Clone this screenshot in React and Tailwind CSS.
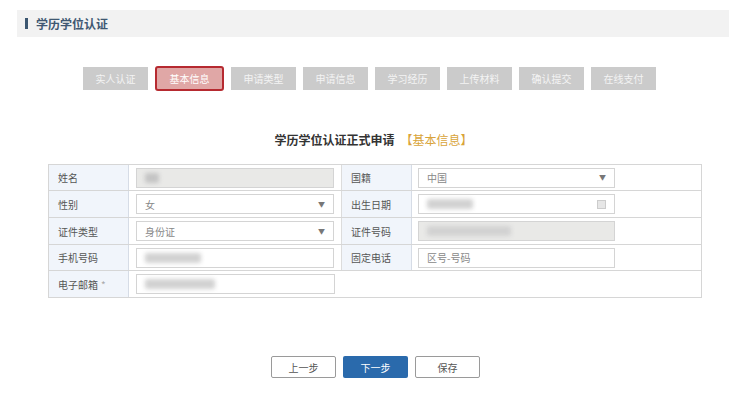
const steps = ["实人认证", "基本信息", "申请类型", "申请信息", "学习经历", "上传材料", "确认提交", "在线支付"];

function Blur({ w, dark }) {
  return (
    <div
      className={`h-[10px] rounded-[2px] blur-[2px] ${dark ? "bg-[#c4c4c4]" : "bg-[#d2d2d2]"}`}
      style={{ width: w }}
    />
  );
}

function Field({ gray, children, arrow, date }) {
  return (
    <div
      className={`flex h-[20px] w-full items-center border border-[#d4d4d4] px-[8px] text-[10px] text-[#888] ${
        gray ? "bg-[#e9e9e7]" : "bg-white"
      }`}
    >
      <div className="flex flex-1 items-center">{children}</div>
      {arrow && <span className="text-[7px] text-[#777]">▼</span>}
      {date && <span className="h-[9px] w-[9px] border border-[#ccc] bg-[#e6e6e6]" />}
    </div>
  );
}

function Label({ w, children }) {
  return (
    <div
      className="flex shrink-0 items-center border-r border-[#d6dce6] bg-[#f1f5fb] px-[9px] text-[10px] text-[#555]"
      style={{ width: w }}
    >
      {children}
    </div>
  );
}

function Cell({ children }) {
  return (
    <div className="flex w-[213px] shrink-0 items-center border-r border-[#dcdcdc] px-[7px]">
      {children}
    </div>
  );
}

function Right({ children }) {
  return <div className="flex flex-1 items-center pl-[6px] pr-[86px]">{children}</div>;
}

function Row({ h, children, last }) {
  return (
    <div className={`flex ${last ? "" : "border-b border-[#d6d6d6]"}`} style={{ height: h }}>
      {children}
    </div>
  );
}

export default function App() {
  return (
    <div
      className="h-[408px] w-[741px] bg-white pt-[10px]"
      style={{ fontFamily: '"Microsoft YaHei", "Noto Sans CJK SC", sans-serif' }}
    >
      {/* Header */}
      <div className="ml-[17px] flex h-[27px] w-[712px] items-center bg-[#f2f2f2] pl-[8px]">
        <span className="h-[11px] w-[3px] bg-[#3b5670]" />
        <span className="ml-[8px] text-[12px] font-bold text-[#3f5872]">学历学位认证</span>
      </div>

      {/* Steps */}
      <div className="mt-[29px] flex items-center justify-center gap-[7px] pr-[2px]">
        {steps.map((s, i) =>
          i === 1 ? (
            <div
              key={s}
              className="flex h-[25px] w-[69px] items-center justify-center rounded-[3px] border-2 border-[#b62a30] bg-[#e0a7a6] text-[10px] text-white"
            >
              {s}
            </div>
          ) : (
            <div
              key={s}
              className="flex h-[23px] w-[65px] items-center justify-center bg-[#cbcbcb] text-[10px] text-[#f4f4f4]"
            >
              {s}
            </div>
          )
        )}
      </div>

      {/* Title */}
      <div className="mt-[40px] flex justify-center pl-[6px] text-[12px] font-bold text-[#333]">
        学历学位认证正式申请
        <span className="ml-[6px] font-normal text-[#d9a43a]">【基本信息】</span>
      </div>

      {/* Table */}
      <div className="ml-[48px] mt-[15px] w-[654px] border border-[#d6d6d6]">
        <Row h={26}>
          <Label w={80}>姓名</Label>
          <Cell>
            <Field gray>
              <Blur w={14} dark />
            </Field>
          </Cell>
          <Label w={70}>国籍</Label>
          <Right>
            <Field arrow>中国</Field>
          </Right>
        </Row>
        <Row h={27}>
          <Label w={80}>性别</Label>
          <Cell>
            <Field arrow>女</Field>
          </Cell>
          <Label w={70}>出生日期</Label>
          <Right>
            <Field date>
              <Blur w={46} />
            </Field>
          </Right>
        </Row>
        <Row h={27}>
          <Label w={80}>证件类型</Label>
          <Cell>
            <Field arrow>身份证</Field>
          </Cell>
          <Label w={70}>证件号码</Label>
          <Right>
            <Field gray>
              <Blur w={84} />
            </Field>
          </Right>
        </Row>
        <Row h={26}>
          <Label w={80}>手机号码</Label>
          <Cell>
            <Field>
              <Blur w={56} />
            </Field>
          </Cell>
          <Label w={70}>固定电话</Label>
          <Right>
            <Field>
              <span className="text-[#888]">区号-号码</span>
            </Field>
          </Right>
        </Row>
        <Row h={26} last>
          <Label w={80}>
            电子邮箱 <span className="ml-[3px] text-[#aaa]">*</span>
          </Label>
          <div className="flex w-[213px] items-center px-[7px]">
            <Field>
              <Blur w={70} />
            </Field>
          </div>
        </Row>
      </div>

      {/* Buttons */}
      <div className="mt-[58px] flex justify-center gap-[7px] pl-[10px]">
        <button className="h-[22px] w-[65px] rounded-[2px] border border-[#9a9a9a] bg-white text-[10px] text-[#555]">
          上一步
        </button>
        <button className="h-[22px] w-[65px] rounded-[2px] bg-[#2a6aac] text-[10px] text-white">
          下一步
        </button>
        <button className="h-[22px] w-[65px] rounded-[2px] border border-[#9a9a9a] bg-white text-[10px] text-[#555]">
          保存
        </button>
      </div>
    </div>
  );
}
